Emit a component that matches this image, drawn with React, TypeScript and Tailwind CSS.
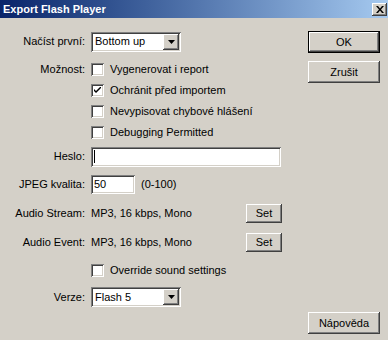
const raised =
  "bg-[#d4d0c8] shadow-[inset_-1px_-1px_#404040,inset_1px_1px_#ffffff,inset_-2px_-2px_#808080,inset_2px_2px_#d4d0c8]";
const sunken =
  "bg-white shadow-[inset_1px_1px_#808080,inset_-1px_-1px_#ffffff,inset_2px_2px_#404040,inset_-2px_-2px_#d4d0c8]";

function Label({ text }: { text: string }) {
  return <div className="w-[86px] shrink-0 pr-[1px] text-right">{text}</div>;
}

function Select({ value, width }: { value: string; width: string }) {
  return (
    <div className={`${sunken} ${width} h-[20px] flex items-center p-[2px]`}>
      <span className="flex-1 pl-[2px]">{value}</span>
      <div className={`${raised} w-[16px] h-[16px] flex items-center justify-center`}>
        <svg width="7" height="4" viewBox="0 0 7 4">
          <path d="M0 0h7L3.5 4z" fill="#000" />
        </svg>
      </div>
    </div>
  );
}

function Checkbox({ checked, label }: { checked?: boolean; label: string }) {
  return (
    <div className="flex items-center">
      <div className={`${sunken} w-[13px] h-[13px] flex items-center justify-center`}>
        {checked && (
          <svg width="7" height="7" viewBox="0 0 7 7">
            <path d="M0 2l2 2 5-5v2L2 6 0 4z" fill="#000" />
          </svg>
        )}
      </div>
      <span className="ml-[6px]">{label}</span>
    </div>
  );
}

function Button({ text, def, className }: { text: string; def?: boolean; className?: string }) {
  return (
    <div className={`${def ? "border border-black" : ""} ${className ?? ""}`}>
      <div className={`${raised} h-full flex items-center justify-center`}>{text}</div>
    </div>
  );
}

export default function App() {
  return (
    <div
      className="w-[388px] h-[340px] bg-[#d4d0c8] text-black text-[11px] leading-none overflow-hidden"
      style={{ fontFamily: '"Liberation Sans", Arial, sans-serif' }}
    >
      <div className="h-[18px] flex items-center bg-gradient-to-r from-[#0a246a] to-[#a6caf0]">
        <span className="flex-1 pl-[3px] text-white font-bold text-[11px]">Export Flash Player</span>
        <div className={`${raised} w-[15px] h-[13px] mr-[1px] flex items-center justify-center`}>
          <svg width="8" height="7" viewBox="0 0 8 7">
            <path d="M0 0h2l2 2.5L6 0h2L5 3.5 8 7H6L4 4.5 2 7H0l3-3.5z" fill="#000" />
          </svg>
        </div>
      </div>

      <div className="flex">
        <div className="w-[308px] flex flex-col">
          <div className="mt-[13px] h-[21px] flex items-center gap-[5px]">
            <Label text="Načíst první:" />
            <Select value="Bottom up" width="w-[90px]" />
          </div>

          <div className="mt-[7px] flex">
            <div className="w-[86px] shrink-0 pr-[1px] text-right h-[21px] flex items-center justify-end">
              Možnost:
            </div>
            <div className="ml-[5px] flex flex-col">
              <div className="h-[21px] flex items-center">
                <Checkbox label="Vygenerovat i report" />
              </div>
              <div className="h-[21px] flex items-center">
                <Checkbox checked label="Ochránit před importem" />
              </div>
              <div className="h-[21px] flex items-center">
                <Checkbox label="Nevypisovat chybové hlášení" />
              </div>
              <div className="h-[21px] flex items-center">
                <Checkbox label="Debugging Permitted" />
              </div>
            </div>
          </div>

          <div className="mt-[3px] h-[21px] flex items-center gap-[5px]">
            <Label text="Heslo:" />
            <div className={`${sunken} w-[190px] h-[20px] flex items-center pl-[3px]`}>
              <div className="w-[1px] h-[13px] bg-black" />
            </div>
          </div>

          <div className="mt-[7px] h-[20px] flex items-center gap-[5px]">
            <Label text="JPEG kvalita:" />
            <div className={`${sunken} w-[44px] h-[19px] flex items-center pl-[3px]`}>50</div>
            <span className="ml-[1px]">(0-100)</span>
          </div>

          <div className="mt-[9px] h-[20px] flex items-center gap-[5px]">
            <Label text="Audio Stream:" />
            <span className="w-[150px]">MP3, 16 kbps, Mono</span>
            <Button text="Set" className="w-[36px] h-[19px]" />
          </div>

          <div className="mt-[9px] h-[20px] flex items-center gap-[5px]">
            <Label text="Audio Event:" />
            <span className="w-[150px]">MP3, 16 kbps, Mono</span>
            <Button text="Set" className="w-[36px] h-[19px]" />
          </div>

          <div className="mt-[8px] h-[20px] flex items-center gap-[5px]">
            <div className="w-[86px] shrink-0" />
            <Checkbox label="Override sound settings" />
          </div>

          <div className="mt-[7px] h-[20px] flex items-center gap-[5px]">
            <Label text="Verze:" />
            <Select value="Flash 5" width="w-[90px]" />
          </div>
        </div>

        <div className="w-[72px] flex flex-col">
          <Button text="OK" def className="mt-[13px] h-[22px]" />
          <Button text="Zrušit" className="mt-[8px] h-[22px]" />
          <Button text="Nápověda" className="mt-[229px] h-[22px]" />
        </div>
      </div>
    </div>
  );
}
